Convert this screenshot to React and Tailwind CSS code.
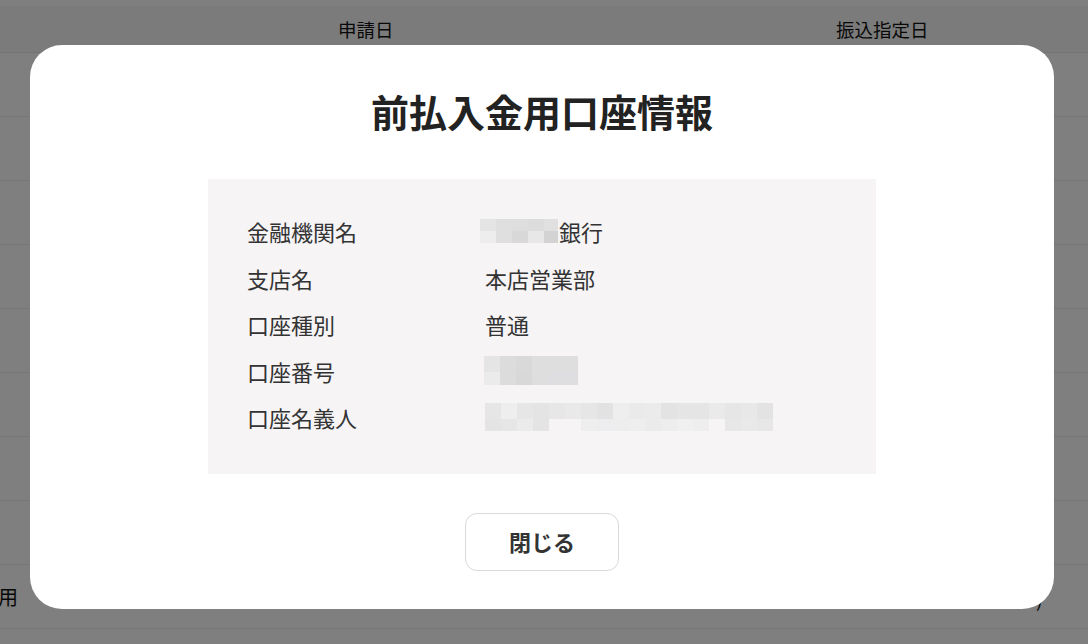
const rows = [
  { label: "金融機関名", value: "銀行", mask: "bank" },
  { label: "支店名", value: "本店営業部" },
  { label: "口座種別", value: "普通" },
  { label: "口座番号", mask: "number" },
  { label: "口座名義人", mask: "holder" },
];

// pixelated (redacted) blocks, one colour per 16px cell
const masks = {
  bank: {
    offset: "-ml-[5px]",
    cellH: ["h-[12px]", "h-[12px]"],
    cells: [
      ["#e5e4e5", "#dfdedf", "#dfdedf", "#dddcdd", "#e1e0e1"],
      ["#eeedee", "#e0dfe0", "#d9d8d9", "#e8e7e8", "#d4d3d4"],
    ],
    last: "w-[14px]",
  },
  number: {
    offset: "-ml-[1px]",
    cellH: ["h-[16px]", "h-[13px]"],
    cells: [
      ["#e6e5e6", "#dddcdd", "#dad9da", "#dfdedf", "#dfdedf", "#dfdedf"],
      ["#ecebec", "#dddcdd", "#d9d8d9", "#dfdedf", "#dedddf", "#dedddf"],
    ],
    last: "w-[14px]",
  },
  holder: {
    offset: "",
    cellH: ["h-[16px]", "h-[12px]"],
    cells: [
      ["#e7e6e7", "#efeeef", "#e7e6e7", "#e5e4e5", "#e8e7e8", "#eae9ea", "#e7e6e7", "#e3e2e3", "#efeeef", "#ebeaeb", "#ecebec", "#e4e3e4", "#e6e5e6", "#e6e5e6", "#ebeaeb", "#e7e6e7", "#e9e8e9", "#e4e3e4"],
      ["#e5e4e5", "#e7e6e7", "#ecebec", "#e5e4e5", "#f6f4f5", "#f6f4f5", "#efeeef", "#edecee", "#eeedee", "#efeeef", "#ecebec", "#eeedee", "#f1f0f1", "#efeeef", "#f6f4f5", "#e8e7e8", "#eae9ea", "#e8e7e8"],
    ],
    last: "w-[16px]",
  },
};

function Mosaic({ kind }) {
  const m = masks[kind];
  return (
    <div className={`flex flex-col ${m.offset}`}>
      {m.cells.map((line, r) => (
        <div key={r} className="flex">
          {line.map((c, i) => (
            <div
              key={i}
              className={`${i === line.length - 1 ? m.last : "w-[16px]"} ${m.cellH[r]}`}
              style={{ backgroundColor: c }}
            />
          ))}
        </div>
      ))}
    </div>
  );
}

export default function App() {
  return (
    <div
      className="relative w-[1088px] h-[644px] overflow-hidden bg-white text-[#111]"
      style={{ fontFamily: '"Noto Sans CJK JP", "Noto Sans", sans-serif' }}
    >
      {/* table behind the dialog */}
      <div className="h-[6px] bg-white" />
      <div className="relative h-[47px] bg-[#f6f6f6] border-b border-[#e8e8e8] text-[18.5px]">
        <span className="absolute left-[338px] top-[14px] leading-none">申請日</span>
        <span className="absolute left-[836px] top-[14px] leading-none">振込指定日</span>
      </div>
      {Array.from({ length: 9 }).map((_, i) => (
        <div key={i} className="relative h-[64px] border-b border-[#ececec] text-[20px]">
          {i === 8 && (
            <>
              <span className="absolute -left-[2px] top-[22px] leading-none">用</span>
              <span className="absolute left-[1036px] top-[24px] leading-none">)</span>
            </>
          )}
        </div>
      ))}

      {/* overlay + dialog */}
      <div className="absolute inset-0 bg-black/50 pl-[30px] pt-[45px]">
        <div className="w-[1024px] h-[564px] bg-white rounded-[32px] flex flex-col items-center">
          <h2 className="mt-[38px] text-[38px] font-bold leading-[56px] text-[#222]">
            前払入金用口座情報
          </h2>
          <div className="mt-[40px] w-[668px] bg-[#f6f4f5] px-[39px] pt-[29px] pb-[33px] text-[22px] text-[#333]">
            {rows.map((row) => (
              <div key={row.label} className="flex items-center h-[46.5px]">
                <div className="w-[238px] leading-none">{row.label}</div>
                <div className="flex items-center leading-none">
                  {row.mask && <Mosaic kind={row.mask} />}
                  {row.value && <span className={row.mask ? "ml-[1px]" : ""}>{row.value}</span>}
                </div>
              </div>
            ))}
          </div>
          <button className="mt-[39px] w-[154px] h-[58px] rounded-[12px] border border-[#d9d9d9] bg-white text-[22px] font-bold text-[#333]">
            閉じる
          </button>
        </div>
      </div>
    </div>
  );
}
